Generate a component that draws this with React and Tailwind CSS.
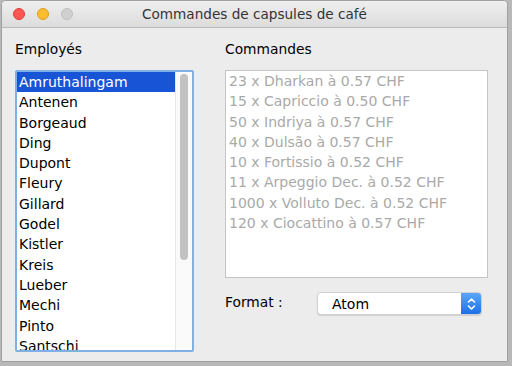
import React from 'react';

const employees = [
  'Amruthalingam', 'Antenen', 'Borgeaud', 'Ding', 'Dupont', 'Fleury', 'Gillard',
  'Godel', 'Kistler', 'Kreis', 'Lueber', 'Mechi', 'Pinto', 'Santschi',
];

const orders = [
  '23 x Dharkan à 0.57 CHF',
  '15 x Capriccio à 0.50 CHF',
  '50 x Indriya à 0.57 CHF',
  '40 x Dulsão à 0.57 CHF',
  '10 x Fortissio à 0.52 CHF',
  '11 x Arpeggio Dec. à 0.52 CHF',
  '1000 x Volluto Dec. à 0.52 CHF',
  '120 x Ciocattino à 0.57 CHF',
];

const App = () => {
  return (
    <div className="w-[512px] h-[366px] bg-[#b8b8b8] pl-[1px] pr-[4px] pb-[4px]" style={{ fontFamily: '"DejaVu Sans", sans-serif' }}>
      <div className="h-full flex flex-col bg-[#ececec] rounded-t-[5px] border border-[#a0a0a0] overflow-hidden">
        {/* title bar */}
        <div className="h-[27px] shrink-0 flex items-center relative bg-gradient-to-b from-[#efefef] to-[#dcdcdc] border-b border-[#b9b9b9]">
          <div className="flex gap-[12px] pl-[11px]">
            <span className="w-[12px] h-[12px] rounded-full bg-[#fc5753] border border-[#df3d39]"></span>
            <span className="w-[12px] h-[12px] rounded-full bg-[#fdbc2e] border border-[#dd9f1f]"></span>
            <span className="w-[12px] h-[12px] rounded-full bg-[#d0d0d0] border border-[#bebebe]"></span>
          </div>
          <div className="absolute inset-0 flex items-center justify-center text-[13.6px] text-[#333]">
            Commandes de capsules de café
          </div>
        </div>

        <div className="flex-1 flex pt-[11px] pl-[13px] pr-[19px]">
          {/* employees */}
          <div className="w-[179px] flex flex-col">
            <div className="text-[13.8px] text-black h-[20px] leading-[20px]">Employés</div>
            <div className="mt-[11px] h-[282px] bg-white border-[2px] border-[#7fb0e3] rounded-[2px] flex overflow-hidden">
              <div className="flex-1 flex flex-col overflow-hidden">
                {employees.map((name, i) => (
                  <div
                    key={name}
                    className={`h-[20.3px] shrink-0 leading-[20px] pl-[2px] text-[14px] ${i === 0 ? 'bg-[#1754d6] text-white' : 'text-black'}`}
                  >
                    {name}
                  </div>
                ))}
              </div>
              <div className="w-[17px] shrink-0 border-l border-[#e6e6e6] bg-[#fafafa] flex justify-center pt-[2px]">
                <div className="w-[8px] h-[186px] rounded-full bg-[#c2c2c2]"></div>
              </div>
            </div>
          </div>

          {/* orders */}
          <div className="flex-1 ml-[31px] flex flex-col">
            <div className="text-[13.8px] text-black h-[20px] leading-[20px]">Commandes</div>
            <div className="mt-[11px] h-[208px] bg-white border border-[#c4c4c4] pl-[3px]">
              {orders.map((o) => (
                <div key={o} className="h-[20.3px] leading-[20px] text-[14px] text-[#a9a9a9]">{o}</div>
              ))}
            </div>
            <div className="mt-[14px] flex items-start">
              <div className="text-[13.8px] text-black w-[92px]">Format :</div>
              <div className="w-[165px] h-[23px] bg-white rounded-[4px] border border-[#d0d0d0] shadow-[0_1px_1px_rgba(0,0,0,0.12)] flex items-center overflow-hidden">
                <div className="flex-1 pl-[14px] text-[14px] text-black leading-[20px] pt-[1px]">Atom</div>
                <div className="w-[20px] h-full bg-gradient-to-b from-[#5aa7f8] to-[#1c6fe6] flex items-center justify-center">
                  <svg width="9" height="14" viewBox="0 0 9 14" fill="none" stroke="white" strokeWidth="1.6" strokeLinecap="round" strokeLinejoin="round">
                    <path d="M1.5 5 L4.5 2 L7.5 5" />
                    <path d="M1.5 9 L4.5 12 L7.5 9" />
                  </svg>
                </div>
              </div>
            </div>
          </div>
        </div>
      </div>
    </div>
  );
};

export default App;
